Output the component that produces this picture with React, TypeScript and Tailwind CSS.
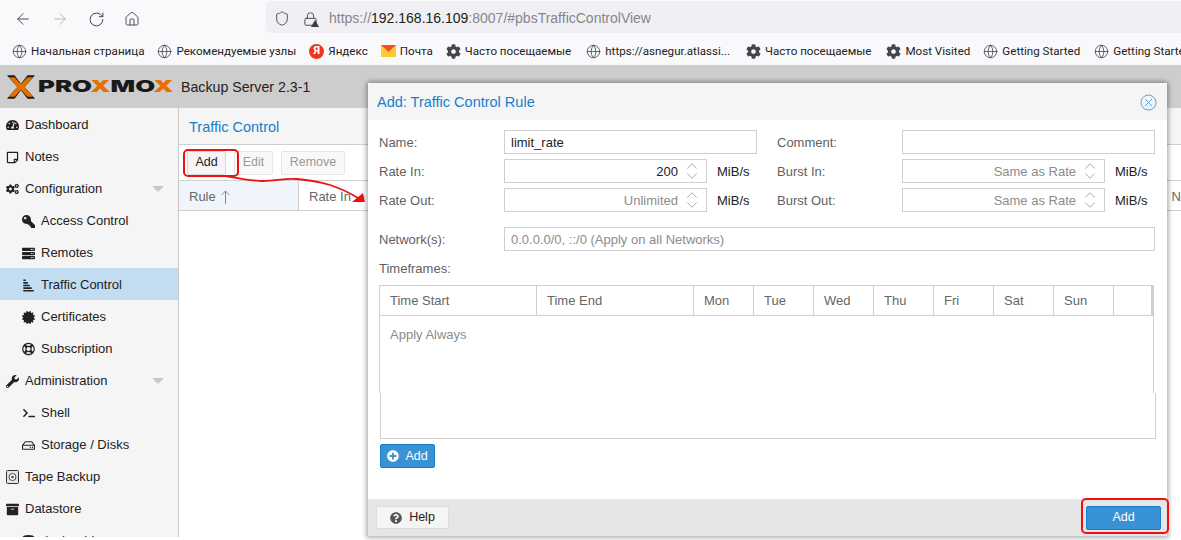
import React from 'react';
import { ArrowLeft, ArrowRight, RotateCw, Home, Shield, Lock, Globe, ChevronUp, ChevronDown } from 'lucide-react';
import {
  FaTachometerAlt, FaRegStickyNote, FaCogs, FaKey, FaServer, FaSignal, FaCertificate, FaRegLifeRing,
  FaWrench, FaTerminal, FaRegHdd, FaArchive, FaDatabase, FaPlusCircle, FaQuestionCircle, FaCog,
} from 'react-icons/fa';

const bookmarks = [
  { icon: 'globe', label: 'Начальная страница', cls: '' },
  { icon: 'globe', label: 'Рекомендуемые узлы', cls: '' },
  { icon: 'ya', label: 'Яндекс', cls: '' },
  { icon: 'mail', label: 'Почта', cls: '' },
  { icon: 'cog', label: 'Часто посещаемые', cls: '' },
  { icon: 'globe', label: 'https://asnegur.atlassi...', cls: 'ml-[2px]' },
  { icon: 'cog', label: 'Часто посещаемые', cls: 'ml-[3px]' },
  { icon: 'cog', label: 'Most Visited', cls: 'ml-[2px]' },
  { icon: 'globe', label: 'Getting Started', cls: '' },
  { icon: 'globe', label: 'Getting Started', cls: 'ml-[1px]' },
];

const BookmarkIcon = ({ kind }: { kind: string }) => {
  if (kind === 'globe') return <Globe className="w-[15px] h-[15px] text-[#45454f]" strokeWidth={1.3} />;
  if (kind === 'cog') return <FaCog className="w-[15px] h-[15px] text-[#45454f]" />;
  if (kind === 'ya') {
    return (
      <span className="w-[15px] h-[15px] rounded-full bg-[#f0341c] text-white text-[11px] font-bold flex items-center justify-center">
        Я
      </span>
    );
  }
  return (
    <svg width="15" height="12" viewBox="0 0 15 12">
      <rect width="15" height="12" fill="#ffc93a" />
      <path d="M0 0h15L7.500 7z" fill="#f4511e" />
    </svg>
  );
};

const TapeIcon = () => (
  <svg width="13" height="14" viewBox="0 0 13 14" fill="none">
    <rect x="0.5" y="0.5" width="12" height="13" rx="1" fill="#e4e4e4" stroke="#333" />
    <circle cx="6.5" cy="7" r="3.5" fill="#fff" stroke="#444" />
    <circle cx="6.5" cy="7" r="1.3" fill="#444" />
  </svg>
);

const NavRow = ({ icon, label, indent, active, caret }: { icon: React.ReactNode; label: string; indent?: boolean; active?: boolean; caret?: boolean }) => (
  <div className={`h-8 pt-[2px] flex items-center shrink-0 text-[#222] ${indent ? 'pl-[22px]' : 'pl-[6px]'} ${active ? 'bg-[#c2ddf2]' : ''}`}>
    <span className="w-[13px] flex justify-center shrink-0">{icon}</span>
    <span className="ml-[6px] whitespace-nowrap">{label}</span>
    {caret && <span className="ml-auto mr-[14px] w-0 h-0 border-x-[6px] border-x-transparent border-t-[6px] border-t-[#c8c8c8]" />}
  </div>
);

const Spinner = ({ value, muted }: { value: string; muted?: boolean }) => (
  <div className="h-[24px] border border-[#cfcfcf] flex items-center justify-end bg-white">
    <span className={`pt-[2px] ${muted ? 'text-[#8c8c8c]' : 'text-[#222]'}`}>{value}</span>
    <span className="w-[28px] flex flex-col items-center text-[#8f8f8f]">
      <ChevronUp className="w-[18px] h-[18px] -my-[4px]" strokeWidth={1} />
      <ChevronDown className="w-[18px] h-[18px] -my-[4px]" strokeWidth={1} />
    </span>
  </div>
);

const FieldLabel = ({ children }: { children: React.ReactNode }) => <span className="pt-[2px] text-[#5f5f5f] whitespace-nowrap">{children}</span>;

const dayCols = ['Mon', 'Tue', 'Wed', 'Thu', 'Fri', 'Sat', 'Sun'];

export default function App() {
  return (
    <div className="relative w-[1181px] h-[540px] overflow-hidden bg-white text-[13px] font-['Liberation_Sans',Arial,sans-serif]">
      {/* browser chrome */}
      <div className="h-[33px] bg-[#f9f9fb] flex items-start">
        <div className="flex items-center gap-[19px] pl-[14px] pt-[10px] w-[266px] text-[#45454f]">
          <ArrowLeft className="w-[18px] h-[18px]" strokeWidth={1.3} />
          <ArrowRight className="w-[18px] h-[18px] text-[#b5b5ba]" strokeWidth={1.3} />
          <RotateCw className="w-[17px] h-[17px]" strokeWidth={1.4} />
          <Home className="w-[16px] h-[16px]" strokeWidth={1.4} />
        </div>
        <div className="flex-1 mt-[1px] h-[32px] bg-[#f0f0f4] rounded-l-[5px] flex items-center pl-[8px] pt-[3px] text-[14px]">
          <Shield className="w-[16px] h-[17px] text-[#45454f]" strokeWidth={1.4} />
          <span className="relative ml-[13px] mr-[11px]">
            <Lock className="w-[15px] h-[16px] text-[#45454f]" strokeWidth={1.5} />
            <span className="absolute -right-[1px] bottom-0 w-0 h-0 border-x-[4px] border-x-transparent border-b-[7px] border-b-[#3d3d3d]" />
          </span>
          <span className="text-[#85858c]">https://</span>
          <span className="text-[#222]">192.168.16.109</span>
          <span className="text-[#85858c]">:8007/#pbsTrafficControlView</span>
        </div>
      </div>
      <div className="h-[32px] bg-[#f9f9fb] flex items-center pl-[12px] pt-[5px] gap-[13px] overflow-hidden text-[11.6px] text-[#222] font-['Roboto',sans-serif] whitespace-nowrap">
        {bookmarks.map((b, i) => (
          <div key={i} className={`flex items-center gap-[4px] shrink-0 ${b.cls}`}>
            <BookmarkIcon kind={b.icon} />
            <span>{b.label}</span>
          </div>
        ))}
      </div>

      {/* app header */}
      <div className="h-[43px] bg-[#cdcdcd] flex items-center pl-[7px]">
        <svg width="28" height="26" viewBox="0 0 26 24">
          <path d="M0 1h7l6 8-3 3.500z" fill="#1a1a1a" />
          <path d="M26 1h-7l-6 8 3 3.500z" fill="#1a1a1a" />
          <path d="M0 23h7l6-8-3-3.500z" fill="#1a1a1a" />
          <path d="M26 23h-7l-6-8 3-3.500z" fill="#1a1a1a" />
          <path d="M2 3h5l6 6.500L19 3h5l-7.500 9L24 21h-5l-6-6.500L7 21H2l7.500-9z" fill="#e57000" />
        </svg>
        <span className="ml-[3px] w-[143px] font-['Inter',sans-serif] font-black text-[16.5px] text-[#1a1a1a] whitespace-nowrap">
          <span className="inline-block origin-left scale-x-[1.56]">
            PRO<span className="text-[#e57000]">X</span>MO<span className="text-[#e57000]">X</span>
          </span>
        </span>
        <span className="pt-[2px] text-[14.2px] text-[#222]">Backup Server 2.3-1</span>
      </div>

      {/* body */}
      <div className="h-[429px] flex">
        <nav className="w-[179px] shrink-0 bg-[#f5f5f5] border-r border-[#c8c8c8] flex flex-col overflow-hidden">
          <NavRow icon={<FaTachometerAlt className="w-[14px] h-[14px]" />} label="Dashboard" />
          <NavRow icon={<FaRegStickyNote className="w-[13px] h-[13px]" />} label="Notes" />
          <NavRow icon={<FaCogs className="w-[16px] h-[16px]" />} label="Configuration" caret />
          <NavRow indent icon={<FaKey className="w-[13px] h-[13px] -scale-x-100" />} label="Access Control" />
          <NavRow indent icon={<FaServer className="w-[13px] h-[13px]" />} label="Remotes" />
          <NavRow indent active icon={<FaSignal className="w-[13px] h-[13px] rotate-90" />} label="Traffic Control" />
          <NavRow indent icon={<FaCertificate className="w-[13px] h-[13px]" />} label="Certificates" />
          <NavRow indent icon={<FaRegLifeRing className="w-[14px] h-[14px]" />} label="Subscription" />
          <NavRow icon={<FaWrench className="w-[13px] h-[13px]" />} label="Administration" caret />
          <NavRow indent icon={<FaTerminal className="w-[12px] h-[12px]" />} label="Shell" />
          <NavRow indent icon={<FaRegHdd className="w-[13px] h-[13px]" />} label="Storage / Disks" />
          <NavRow icon={<TapeIcon />} label="Tape Backup" />
          <NavRow icon={<FaArchive className="w-[13px] h-[13px]" />} label="Datastore" />
          <NavRow indent icon={<FaDatabase className="w-[13px] h-[13px]" />} label="docker-bkp" />
        </nav>
        <main className="flex-1 flex flex-col min-w-0">
          <div className="h-[37px] bg-[#f5f5f5] border-b border-[#cfcfcf] flex items-center pl-[10px] pt-[3px] text-[14.5px] text-[#157fcc]">Traffic Control</div>
          <div className="h-[36px] flex items-center pl-[8px] gap-[8px] border-b border-[#cfcfcf] text-[12.5px]">
            <div className="w-[39px] h-[24px] border border-[#d8d8d8] rounded-[2px] bg-[#f5f5f5] flex items-center justify-center text-[#222]">Add</div>
            <div className="w-[39px] h-[24px] border border-[#e6e6e6] rounded-[2px] bg-[#f9f9f9] flex items-center justify-center text-[#9a9a9a]">Edit</div>
            <div className="w-[64px] h-[24px] border border-[#e6e6e6] rounded-[2px] bg-[#f9f9f9] flex items-center justify-center text-[#9a9a9a]">Remove</div>
          </div>
          <div className="h-[30px] flex border-b border-[#cfcfcf] text-[#666] overflow-hidden">
            <div className="w-[120px] shrink-0 bg-[#f0f5fb] border-r border-[#cfcfcf] flex items-center pl-[10px] pt-[2px]">
              Rule
              <svg className="ml-[5px]" width="9" height="14" viewBox="0 0 9 14" fill="none" stroke="#888">
                <path d="M4.500 14V1M.8 4.800 4.500 1l3.700 3.800" />
              </svg>
            </div>
            <div className="flex-1 flex items-center pl-[10px] pt-[2px]">Rate In</div>
            <div className="flex items-center whitespace-nowrap translate-x-[7px] pt-[2px]">Ne</div>
          </div>
        </main>
      </div>

      {/* modal dialog */}
      <div className="absolute left-[368px] top-[83px] w-[799px] h-[453px] flex flex-col bg-white rounded-t-[3px] shadow-[0_0_4px_2px_rgba(0,0,0,0.3)]">
        <div className="h-[37px] shrink-0 bg-[#f5f5f5] flex items-center pl-[9px] pr-[10px] text-[14.5px] text-[#157fcc]">
          <span className="pt-[2px]">Add: Traffic Control Rule</span>
          <svg className="ml-auto mt-[1px]" width="17" height="17" viewBox="0 0 17 17" fill="none" stroke="#5a9fd8">
            <circle cx="8.500" cy="8.500" r="7.500" />
            <path d="M5 5l7 7M12 5l-7 7" />
          </svg>
        </div>
        <div className="flex-1 flex flex-col pl-[11px] pr-[12px] pt-[10px]">
          <div className="grid grid-cols-[125px_253px_20px_125px_253px] gap-y-[5px] items-center">
            <FieldLabel>Name:</FieldLabel>
            <div className="h-[24px] border border-[#cfcfcf] flex items-center pl-[6px] pt-[2px] text-[#222]">limit_rate</div>
            <span />
            <FieldLabel>Comment:</FieldLabel>
            <div className="h-[24px] border border-[#cfcfcf]" />

            <FieldLabel>Rate In:</FieldLabel>
            <div className="grid grid-cols-[203px_1fr] items-center">
              <Spinner value="200" />
              <span className="pl-[10px] pt-[2px] text-[#222]">MiB/s</span>
            </div>
            <span />
            <FieldLabel>Burst In:</FieldLabel>
            <div className="grid grid-cols-[203px_1fr] items-center">
              <Spinner value="Same as Rate" muted />
              <span className="pl-[10px] pt-[2px] text-[#222]">MiB/s</span>
            </div>

            <FieldLabel>Rate Out:</FieldLabel>
            <div className="grid grid-cols-[203px_1fr] items-center">
              <Spinner value="Unlimited" muted />
              <span className="pl-[10px] pt-[2px] text-[#222]">MiB/s</span>
            </div>
            <span />
            <FieldLabel>Burst Out:</FieldLabel>
            <div className="grid grid-cols-[203px_1fr] items-center">
              <Spinner value="Same as Rate" muted />
              <span className="pl-[10px] pt-[2px] text-[#222]">MiB/s</span>
            </div>
          </div>

          <div className="mt-[15px] flex items-center">
            <span className="w-[125px] shrink-0 flex"><FieldLabel>Network(s):</FieldLabel></span>
            <div className="flex-1 h-[24px] border border-[#cfcfcf] flex items-center pl-[6px] pt-[2px] text-[#8c8c8c]">0.0.0.0/0, ::/0 (Apply on all Networks)</div>
          </div>
          <div className="mt-[7px] h-[20px] flex items-center"><FieldLabel>Timeframes:</FieldLabel></div>

          {/* the source shot is stitched here: lower part of the table sits 1px to the right */}
          <div className="mt-[7px] w-[775px] h-[108px] border border-b-0 border-[#cfcfcf] flex flex-col">
            <div className="h-[30px] shrink-0 flex border-b border-[#cfcfcf] border-r-2 text-[#666]">
              <div className="w-[157px] border-r border-[#cfcfcf] flex items-center pl-[10px] pt-[1px]">Time Start</div>
              <div className="w-[157px] border-r border-[#cfcfcf] flex items-center pl-[10px] pt-[1px]">Time End</div>
              {dayCols.map(d => (
                <div key={d} className="w-[60px] border-r border-[#cfcfcf] flex items-center pl-[10px] pt-[1px]">{d}</div>
              ))}
              <div className="flex-1" />
            </div>
            <div className="pl-[10px] pt-[9px] text-[#8c8c8c]">Apply Always</div>
          </div>
          <div className="ml-[1px] w-[776px] h-[46px] border border-t-0 border-[#cfcfcf] shrink-0" />

          <div className="mt-[5px] ml-[1px] w-[55px] h-[24px] rounded-[2px] bg-[#3892d4] border border-[#157fcc] flex items-center justify-center gap-[6px] text-[12.5px] text-white">
            <FaPlusCircle className="w-[12px] h-[12px]" />
            <span>Add</span>
          </div>
        </div>
        <div className="h-[37px] shrink-0 bg-[#e6e6e6] flex items-center justify-between pl-[8px] pr-[6px]">
          <div className="w-[73px] h-[23px] rounded-[2px] border border-[#dcdcdc] bg-[#f5f5f5] flex items-center justify-center gap-[7px] text-[12.5px] text-[#222]">
            <FaQuestionCircle className="w-[12px] h-[12px] text-[#555]" />
            <span>Help</span>
          </div>
          <div className="w-[75px] h-[24px] rounded-[2px] bg-[#3892d4] border border-[#157fcc] flex items-center justify-center text-[12.5px] text-white">Add</div>
        </div>
      </div>

      {/* screenshot annotations */}
      <div className="absolute left-[183px] top-[149px] w-[56px] h-[28px] border-2 border-[#f01010] rounded-[5px]" />
      <div className="absolute left-[1081px] top-[498px] w-[88px] h-[36px] border-2 border-[#f01010] rounded-[5px]" />
      <svg className="absolute left-[220px] top-[170px]" width="150" height="40" viewBox="0 0 150 40" fill="none">
        <path d="M5 6 C22 9 32 11 43 11 C55 11 65 8 77 9 C90 10 100 12 110 15 C122 19 130 23 138 28" stroke="#f01010" strokeWidth="1.8" />
        <path d="M145 32 L132 32 L143 23 z" fill="#f01010" />
      </svg>
    </div>
  );
}
